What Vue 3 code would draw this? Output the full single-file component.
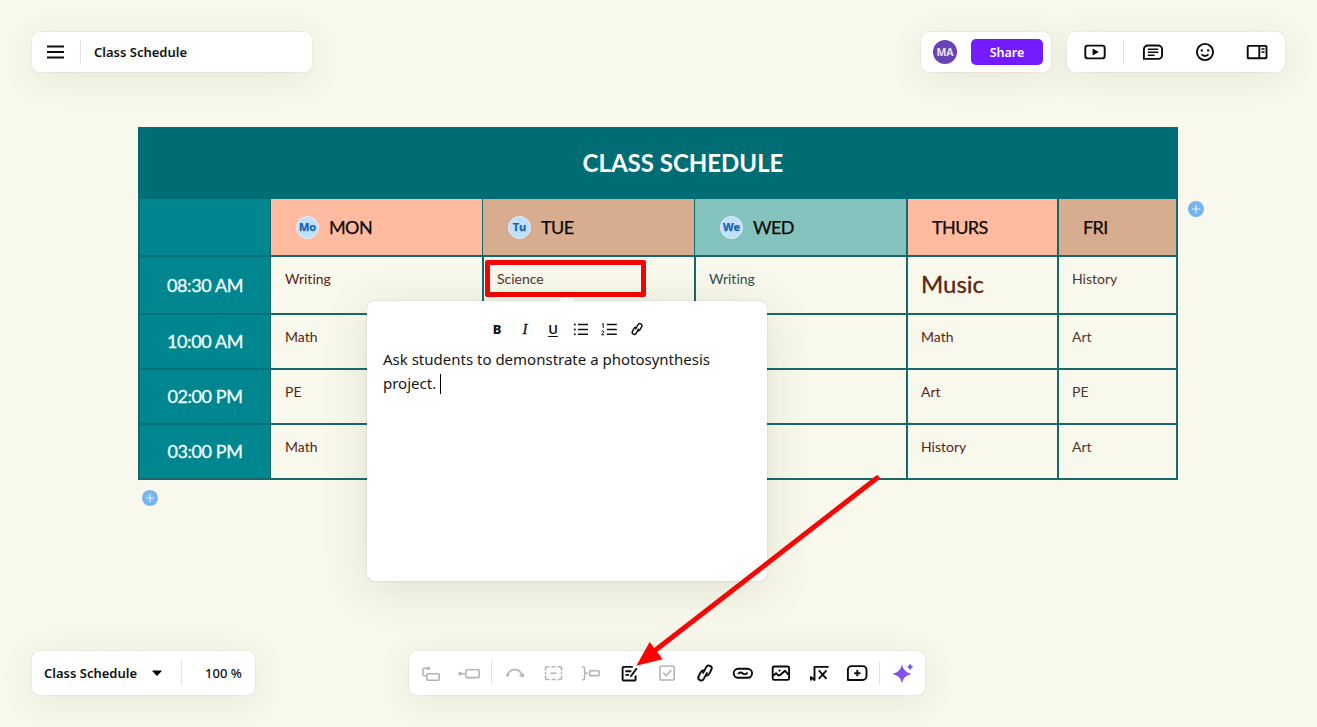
<template>
  <div class="app">
    <header class="top">
      <div class="panel title-panel">
        <svg class="menu" viewBox="0 0 24 24"><path d="M3 6.5h17M3 12h17M3 17.5h17" /></svg>
        <i class="divider"></i>
        <span class="name">Class Schedule</span>
      </div>
      <div class="top-right">
        <div class="panel share-panel">
          <span class="avatar">MA</span>
          <button class="share">Share</button>
        </div>
        <div class="panel view-panel">
          <template v-for="(item, i) in viewTools" :key="i">
            <span v-if="item === '|'" class="split"><i class="divider"></i></span>
            <button v-else class="tool wide"><svg viewBox="0 0 24 24" v-html="icons[item]"></svg></button>
          </template>
        </div>
      </div>
    </header>

    <main class="canvas">
      <div class="sheet">
        <div class="grid">
          <div class="sheet-title">CLASS SCHEDULE</div>
          <div class="corner"></div>
          <div v-for="day in days" :key="day.label" class="day" :class="day.tone">
            <span v-if="day.badge" class="badge">{{ day.badge }}</span>
            <span>{{ day.label }}</span>
          </div>
          <template v-for="row in rows" :key="row.time">
            <div class="time"><span>{{ row.time }}</span></div>
            <div
              v-for="(subject, i) in row.subjects"
              :key="i"
              class="cell"
              :class="['col-' + i, { large: subject === 'Music' }]"
            >{{ subject }}</div>
          </template>
        </div>
        <span class="add add-column"><svg viewBox="0 0 16 16"><path d="M8 4v8M4 8h8" /></svg></span>
        <span class="add add-row"><svg viewBox="0 0 16 16"><path d="M8 4v8M4 8h8" /></svg></span>
      </div>
    </main>

    <footer class="bottom">
      <div class="panel sheet-panel">
        <span class="name">Class Schedule</span>
        <svg class="caret" viewBox="0 0 10 6"><path d="M.8.5h8.4a.5.5 0 0 1 .3.8L5.5 5.4a.7.7 0 0 1-1 0L.5 1.3A.5.5 0 0 1 .8.5z" /></svg>
        <i class="divider"></i>
        <span class="zoom">100 %</span>
      </div>
      <div class="panel tools-panel">
        <template v-for="(item, i) in bottomTools" :key="i">
          <span v-if="item === '|'" class="split"><i class="divider"></i></span>
          <button v-else class="tool" :class="{ disabled: disabled.includes(item) }">
            <svg viewBox="0 0 24 24" v-html="icons[item]"></svg>
          </button>
        </template>
      </div>
    </footer>

    <div class="marker"></div>

    <section class="note">
      <div class="note-tools">
        <button class="fmt bold">B</button>
        <button class="fmt italic">I</button>
        <button class="fmt underline">U</button>
        <button v-for="name in ['bullets', 'numbers', 'smallLink']" :key="name" class="fmt">
          <svg viewBox="0 0 24 24" v-html="icons[name]"></svg>
        </button>
      </div>
      <p class="note-text">Ask students to demonstrate a photosynthesis<br />project. <i class="cursor"></i></p>
    </section>

    <svg class="arrow" viewBox="0 0 250 200">
      <path class="shaft" d="M247 8L25 180.5" />
      <path class="head" d="M6.3 195.7L19.7 172L32.7 189.2z" />
    </svg>
  </div>
</template>

<script setup>
const days = [
  { label: 'MON', badge: 'Mo', tone: 'peach' },
  { label: 'TUE', badge: 'Tu', tone: 'tan' },
  { label: 'WED', badge: 'We', tone: 'mint' },
  { label: 'THURS', tone: 'peach thick' },
  { label: 'FRI', tone: 'tan thick' }
]

const rows = [
  { time: '08:30 AM', subjects: ['Writing', 'Science', 'Writing', 'Music', 'History'] },
  { time: '10:00 AM', subjects: ['Math', '', '', 'Math', 'Art'] },
  { time: '02:00 PM', subjects: ['PE', '', '', 'Art', 'PE'] },
  { time: '03:00 PM', subjects: ['Math', '', '', 'History', 'Art'] }
]

const viewTools = ['play', '|', 'comments', 'smile', 'sidebar']
const bottomTools = [
  'subtopic', 'topic', '|', 'relation', 'boundary', 'summary', 'note', 'todo',
  'link', 'label', 'image', 'equation', 'comment', '|', 'sparkle'
]
const disabled = ['subtopic', 'topic', 'relation', 'boundary', 'summary', 'todo']

// two interlocked chain loops, shared by both link buttons
const chain = '<g transform="rotate(28 12 12)"><path d="M10.3 13.6V6.2a2.9 2.9 0 0 1 5.8 0v4.6a2.9 2.9 0 0 1-2.4 2.9"/><path d="M13.7 10.4v7.4a2.9 2.9 0 0 1-5.8 0v-4.6a2.9 2.9 0 0 1 2.4-2.9"/></g>'

const icons = {
  play: '<rect x="2.3" y="5.6" width="19.4" height="12.8" rx="2.4"/><path class="solid" d="M9.6 8.5l6.2 3.5-6.2 3.5z"/>',
  comments: '<path d="M2.9 18.9V9.5a4 4 0 0 1 4-4h10.2a4 4 0 0 1 4 4v5.4a4 4 0 0 1-4 4z"/><path class="fine" d="M6.8 9.2h10.5M6.8 12.2h10.5M6.8 15.2h6.8"/>',
  smile: '<circle cx="12" cy="12" r="8.1"/><circle class="solid" cx="8.8" cy="10.4" r="1.2"/><circle class="solid" cx="15.2" cy="10.4" r="1.2"/><path d="M8.6 14.2c1.7 2.3 5.1 2.3 6.8 0"/>',
  sidebar: '<rect x="2.7" y="5.9" width="18.8" height="12.4" rx=".8"/><path d="M14.3 6v12.2"/><path class="fine" d="M16.4 9h3.2M16.4 12h3.2"/>',
  subtopic: '<rect x="7.8" y="12.8" width="12.4" height="6.4" rx="1.2"/><path d="M9.3 7.2H5.4a1.6 1.6 0 0 0-1.6 1.6v4.4a1.6 1.6 0 0 0 1.6 1.6h2.4"/><circle class="solid" cx="9.4" cy="7.2" r="1.8"/>',
  topic: '<rect x="8.8" y="8.8" width="13.4" height="7.8" rx="1.2"/><path d="M3 12.7h5.8"/><circle class="solid" cx="3.2" cy="12.7" r="1.9"/>',
  relation: '<path d="M4.6 13.6c3-6.6 11.4-6.6 14 0"/><circle class="solid" cx="4.6" cy="14" r="1.6"/><path class="solid" d="M15.7 14.9l5.2-3v4.6z"/>',
  boundary: '<path d="M4.5 9.5V7.3A1.5 1.5 0 0 1 6 5.8h2.4M10.5 5.8h4M16.6 5.8H19a1.5 1.5 0 0 1 1.5 1.5v2.2M20.5 14.8V17a1.5 1.5 0 0 1-1.5 1.5h-2.4M14.5 18.5h-4M8.4 18.5H6A1.5 1.5 0 0 1 4.5 17v-2.2M4.5 11.2v2M20.5 11.2v2M9.5 12.2h6"/>',
  summary: '<path class="fine" d="M3.2 5.7h1a1.3 1.3 0 0 1 1.3 1.3v3.6c0 .9.6 1.5 1.5 1.5-.9 0-1.5.7-1.5 1.6v3.7a1.3 1.3 0 0 1-1.3 1.3h-1M7 12.2h1.8"/><rect x="10.6" y="9.8" width="9.6" height="4.8" rx=".9"/>',
  note: '<path d="M15.8 5.9H6.6a1 1 0 0 0-1 1v11.6a1 1 0 0 0 1 1h11a1 1 0 0 0 1-1v-4"/><path d="M8.4 10.2h6M8.4 13.9h3.6M19.8 7.3l-5.6 7.4"/><path class="solid" d="M13.3 13.8l-.3 2.5 2.4-1.1z"/>',
  todo: '<rect x="5" y="5" width="14.2" height="14" rx="1"/><path d="M8.2 11.7l3 3 5.2-5.6"/>',
  link: chain,
  label: '<rect x="2.7" y="7.8" width="18.4" height="9" rx="4.5"/><path d="M7.2 13.1c1.2-2.4 3.2-1.8 4.7-.7s3.3 1.2 4.6-.8"/>',
  image: '<rect x="3.7" y="5.5" width="16.4" height="13.4" rx="1.5"/><path d="M4.2 14.7l2.9-2.5 2.5 2.4 2.5-1.3 3.8-3.6 3.8 4.2"/><circle class="solid" cx="10.5" cy="9.6" r="1.1"/>',
  equation: '<path d="M3.9 19.4v-3.3l3.6 2.9V5.9h14.2"/><path d="M11.8 9.4l7.7 8.5M19.5 9.4l-7.7 8.5"/>',
  comment: '<path d="M2.9 19V8.6A3.5 3.5 0 0 1 6.4 5.1h11.1a4 4 0 0 1 4 4v5.9a4 4 0 0 1-4 4z"/><path d="M12.3 9.1v6.2M9.2 12.2h6.2"/>',
  sparkle: '<defs><linearGradient id="spark" x1="0" y1="0" x2="1" y2="1"><stop offset="0" stop-color="#6a4cf5"/><stop offset="1" stop-color="#a257e8"/></linearGradient></defs><path style="fill:url(#spark);stroke:none" d="M11 3.6c1.6 5.6 3.4 7.5 9.4 9.3-6 1.8-7.8 3.7-9.4 9.3-1.6-5.6-3.4-7.5-9.4-9.3 6-1.8 7.8-3.7 9.4-9.3z"/><path style="fill:#7650ed;stroke:none" d="M19.1 2.4q.8 2.7 3.4 3.4-2.6.7-3.4 3.4-.8-2.7-3.4-3.4 2.6-.7 3.4-3.4z"/>',
  bullets: '<path class="fine" d="M9 7.4h10M9 12.4h10M9 17.2h10"/><circle class="solid" cx="5.8" cy="7.4" r="1"/><circle class="solid" cx="5.8" cy="12.4" r="1"/><circle class="solid" cx="5.8" cy="17.2" r="1"/>',
  numbers: '<path class="fine" d="M9.8 7.4h10M9.8 12.4h10M9.8 17.2h10"/><path class="thin" d="M5.2 7.2l1-.7V11M4.6 14.6c.4-1.3 2.6-1 2.2.5-.2.8-1.5 1.5-2.1 2.7h2.4"/>',
  smallLink: '<g transform="translate(3.4 3.4) scale(.72)" stroke-width="2">' + chain + '</g>'
}
</script>

<style>
body {
  margin: 0;
  overflow: hidden;
}
</style>

<style scoped>
.app {
  position: relative;
  display: flex;
  flex-direction: column;
  box-sizing: border-box;
  width: 100%;
  height: 100vh;
  padding: 32px;
  background: #f8f8ec;
  color: #111;
  font-family: "Noto Sans", "Open Sans", sans-serif;
  font-size: 13px;
}

button {
  padding: 0;
  border: 0;
  background: none;
  color: inherit;
  font-family: inherit;
}

.panel {
  display: flex;
  align-items: center;
  box-sizing: border-box;
  border-radius: 8px;
  background: #fff;
  box-shadow: 0 0 2px rgba(0, 0, 0, 0.12), 0 6px 36px rgba(60, 60, 30, 0.09);
}

.divider {
  width: 1px;
  height: 24px;
  background: #e3e3e3;
}

.name {
  font-weight: 600;
  white-space: nowrap;
}

/* header */
.top {
  display: flex;
  justify-content: space-between;
  height: 40px;
}

.title-panel {
  width: 280px;
  padding-left: 12px;
}

.menu {
  width: 24px;
  height: 24px;
  margin-right: 12px;
  fill: none;
  stroke: #111;
  stroke-width: 1.8;
}

.title-panel .name {
  margin-left: 13px;
}

.top-right {
  display: flex;
  gap: 16px;
}

.share-panel {
  width: 130px;
  padding: 0 8px 0 12px;
  justify-content: space-between;
}

.avatar {
  width: 24px;
  height: 24px;
  border-radius: 50%;
  background: #6843b3;
  color: #eee6fa;
  font: 700 10.5px/24px "Open Sans", sans-serif;
  text-align: center;
}

.share {
  width: 72px;
  height: 26px;
  border-radius: 5px;
  background: #741cff;
  color: #fff;
  font-size: 12.5px;
  font-weight: 600;
}

.view-panel {
  width: 218px;
  padding: 0 2px;
}

.tool {
  display: flex;
  align-items: center;
  justify-content: center;
  width: 38px;
  height: 38px;
  color: #0b0b0b;
}

.tool.wide {
  width: 52px;
}

.tool.disabled {
  color: #b3b3b3;
}

.tool svg,
.fmt svg {
  width: 24px;
  height: 24px;
  fill: none;
  stroke: currentColor;
  stroke-width: 1.9;
  stroke-linejoin: round;
}

.tool.disabled svg {
  stroke-width: 1.6;
}

svg :deep(.solid) {
  fill: currentColor;
  stroke: none;
}

svg :deep(.fine) {
  stroke-width: 1.5;
}

svg :deep(.thin) {
  stroke-width: 1;
}

.split {
  display: flex;
  box-sizing: border-box;
  width: 6px;
  padding-left: 2px;
}

/* schedule */
.canvas {
  flex: 1;
  padding: 55px 0 0 106px;
}

.sheet {
  position: relative;
  width: 1040px;
}

.grid {
  display: grid;
  grid-template-columns: 130px 212px 212px 212px 151px 119px;
  grid-template-rows: 70px 58px 58px 55px 55px 53px;
  border: 2px solid #17686d;
  font-family: Lato, sans-serif;
  font-variant-ligatures: none;
}

.sheet-title {
  grid-column: 1 / -1;
  margin: -2px -2px 0;
  padding-left: 50px;
  background: #006d75;
  color: #fff;
  font-size: 24px;
  font-weight: 700;
  line-height: 71px;
  text-align: center;
}

.corner,
.time {
  border-bottom: 2px solid #04717a;
  background: #00868f;
}

.day {
  display: flex;
  align-items: center;
  gap: 10px;
  padding-left: 25px;
  border-left: 1px solid #17686d;
  border-bottom: 2px solid #17686d;
  color: #0c0806;
  font-size: 18px;
  letter-spacing: -0.6px;
  -webkit-text-stroke: 0.25px currentColor;
}

.day.thick {
  padding-left: 24px;
  border-left-width: 2px;
}

.peach {
  background: #ffbb9f;
}

.tan {
  background: #d7ac8f;
}

.mint {
  background: #84c3bd;
}

.badge {
  box-sizing: border-box;
  width: 23px;
  height: 23px;
  border: 1.5px solid #e4f0f8;
  border-radius: 50%;
  background: #bfe0ff;
  color: #1562ac;
  font: 700 11px/20px "Open Sans", sans-serif;
  letter-spacing: 0;
  text-align: center;
}

.time {
  display: flex;
  align-items: center;
  justify-content: center;
  color: #f3ffff;
  font-size: 18px;
  letter-spacing: -0.4px;
  -webkit-text-stroke: 0.3px currentColor;
}

.time:nth-last-child(-n + 18) {
  padding-bottom: 2px;
}

.cell {
  padding: 12px 0 0 13px;
  border-left: 2px solid #17686d;
  border-bottom: 2px solid #17686d;
  color: #5b2410;
  font-size: 14px;
  line-height: 20px;
}

.cell.col-0 {
  padding-left: 14px;
  border-left-width: 1px;
}

.cell.col-1,
.cell.col-4 {
  color: #513728;
}

.cell.col-2 {
  color: #31504c;
}

.cell.large {
  padding-top: 17px;
  font-size: 24px;
  -webkit-text-stroke: 0.3px currentColor;
}

.time:nth-last-child(-n + 6),
.cell:nth-last-child(-n + 5) {
  border-bottom: 0;
}

.add {
  position: absolute;
  width: 16px;
  height: 16px;
  border-radius: 50%;
  background: #77b5f2;
}

.add svg {
  display: block;
  stroke: #e3f1fd;
  stroke-width: 1.2;
}

.add-column {
  top: 74px;
  left: 1050px;
}

.add-row {
  top: 363px;
  left: 4px;
}

/* footer */
.bottom {
  display: flex;
  gap: 154px;
  height: 44px;
}

.sheet-panel {
  width: 223px;
  padding-left: 12px;
}

.caret {
  width: 10px;
  height: 6px;
  margin: 0 19px 0 15px;
}

.zoom {
  margin-left: 23px;
  font-weight: 500;
}

.tools-panel {
  width: 516px;
  padding: 0 3px;
}

.tools-panel .split {
  width: 8px;
  padding-left: 3px;
}

/* note popover */
.note {
  position: absolute;
  top: 301px;
  left: 367px;
  box-sizing: border-box;
  width: 400px;
  height: 280px;
  padding: 14px 16px;
  border-radius: 8px;
  background: #fff;
  box-shadow: 0 0 2px rgba(0, 0, 0, 0.15), 0 8px 48px rgba(60, 60, 30, 0.13);
}

.note::before {
  content: "";
  position: absolute;
  top: -3px;
  left: 193px;
  width: 14px;
  height: 4px;
  border-radius: 5px 5px 0 0;
  background: #fff;
}

.note-tools {
  display: flex;
  justify-content: center;
}

.fmt {
  display: flex;
  align-items: center;
  justify-content: center;
  width: 28px;
  height: 28px;
  font-size: 13px;
}

.fmt.bold {
  font-weight: 800;
}

.fmt.italic {
  font: italic 15px "Liberation Serif", serif;
  -webkit-text-stroke: 0.3px currentColor;
}

.fmt.underline {
  font-weight: 600;
  text-decoration: underline;
  text-underline-offset: 2px;
}

.note-text {
  margin: 4px 0 0;
  color: #161616;
  font-size: 15px;
  line-height: 24px;
  white-space: pre-wrap;
}

.cursor {
  display: inline-block;
  width: 1px;
  height: 20px;
  background: #000;
  vertical-align: -5px;
}

/* annotations */
.marker {
  position: absolute;
  top: 260px;
  left: 485px;
  box-sizing: border-box;
  width: 161px;
  height: 37px;
  border: 5px solid #f00606;
  border-radius: 2px;
}

.arrow {
  position: absolute;
  top: 470px;
  left: 630px;
  width: 250px;
  height: 200px;
}

.shaft {
  fill: none;
  stroke: #f30707;
  stroke-width: 5;
  stroke-linecap: round;
}

.head {
  fill: #f00;
}
</style>
